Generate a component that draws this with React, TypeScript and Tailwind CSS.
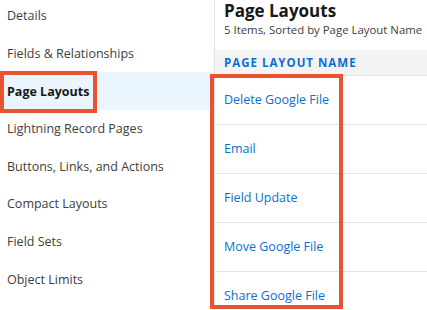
import React from "react";

const sideItems = [
  "Details",
  "Fields & Relationships",
  "Page Layouts",
  "Lightning Record Pages",
  "Buttons, Links, and Actions",
  "Compact Layouts",
  "Field Sets",
  "Object Limits",
];

const layouts = [
  "Delete Google File",
  "Email",
  "Field Update",
  "Move Google File",
  "Share Google File",
];

export default function App() {
  return (
    <div
      className="relative w-[427px] h-[310px] overflow-hidden bg-white flex"
      style={{ fontFamily: '"Open Sans", "Noto Sans", sans-serif' }}
    >
      <aside className="w-[214px] shrink-0 flex flex-col mt-[-3px]">
        {sideItems.map((item) => {
          const active = item === "Page Layouts";
          return (
            <div
              key={item}
              className={
                active
                  ? "h-[37.6px] shrink-0 flex items-center pl-[7px] pt-[2px] bg-[#eaf5fe] text-[#181818] font-bold text-[12.5px]"
                  : "h-[37.6px] shrink-0 flex items-center pl-[7px] pt-[2px] text-[#3e3e3c] text-[12.5px]"
              }
            >
              {item}
            </div>
          );
        })}
      </aside>
      <main className="flex-1 border-l border-[#e5e5e5] flex flex-col min-w-0">
        <div className="h-[50px] shrink-0 pl-[9px] pt-[1px]">
          <h1 className="text-[17px] font-bold leading-[20px] text-[#181818] whitespace-nowrap">
            Page Layouts
          </h1>
          <p className="text-[11.4px] leading-[18px] text-[#3e3e3c] whitespace-nowrap">
            5 Items, Sorted by Page Layout Name
          </p>
        </div>
        <div className="h-[26px] shrink-0 bg-[#f3f3f3] border-b border-[#e5e5e5] flex items-center pl-[9px] pt-[1px]">
          <span className="text-[11.5px] font-bold tracking-[1px] text-[#0b6fd0] whitespace-nowrap">
            PAGE LAYOUT NAME
          </span>
        </div>
        {layouts.map((l) => (
          <div
            key={l}
            className="h-[49px] shrink-0 border-b border-[#e5e5e5] flex items-center pl-[9px]"
          >
            <span className="text-[12.5px] text-[#0b6fd0] whitespace-nowrap">{l}</span>
          </div>
        ))}
      </main>
      <div className="absolute left-0 top-[71px] w-[97px] h-[42px] border-[4px] border-[#e8542f] pointer-events-none" />
      <div className="absolute left-[210px] top-[74px] w-[133px] h-[235px] border-[4px] border-[#e8542f] pointer-events-none" />
    </div>
  );
}
